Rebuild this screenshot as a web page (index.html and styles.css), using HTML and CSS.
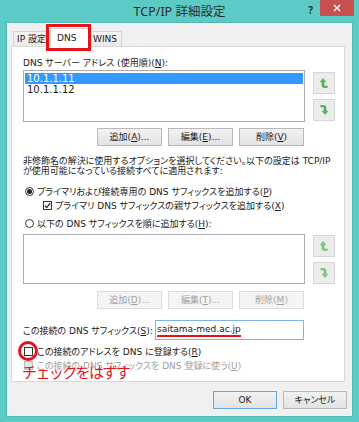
FILE: index.html
```html
<!DOCTYPE html>
<html lang="ja">
<head>
    <meta charset="UTF-8">
    <meta name="viewport" content="width=device-width, initial-scale=1.0">
    <title>TCP/IP 詳細設定</title>
    <link rel="stylesheet" href="styles.css">
</head>
<body>
<div class="window">
    <div class="titlebar">
        <span></span>
        <span class="title">TCP/IP 詳細設定</span>
        <div class="controls">
            <span class="help">?</span>
            <span class="close">
                <svg width="8" height="8" viewBox="0 0 8 8"><path d="M1 1 L7 7 M7 1 L1 7" stroke="#fff" stroke-width="1.4"/></svg>
            </span>
        </div>
    </div>

    <div class="client">
        <div class="tabs">
            <div class="tab tab-ip">IP 設定</div>
            <div class="tab tab-dns active">DNS<span class="mark-box"></span></div>
            <div class="tab tab-wins">WINS</div>
        </div>

        <div class="panel">
            <div class="label">DNS サーバー アドレス (使用順)(<u>N</u>):</div>
            <div class="list-row">
                <div class="listbox">
                    <div class="item selected">10.1.1.11</div>
                    <div class="item">10.1.1.12</div>
                </div>
                <div class="side">
                    <span class="side-btn">
                        <svg width="8" height="10" viewBox="0 0 8 10"><path d="M3 0.5 L0.3 3.8 H2 V7.4 Q2 9.5 4.2 9.5 H7.2 V8 H4.6 Q3.9 8 3.9 7.2 V3.8 H5.7 Z" fill="#4fbf4a" stroke="#2f8f30" stroke-width=".5"/></svg>
                    </span>
                    <span class="side-btn">
                        <svg width="8" height="10" viewBox="0 0 8 10"><path d="M3 0.5 L0.3 3.8 H2 V7.4 Q2 9.5 4.2 9.5 H7.2 V8 H4.6 Q3.9 8 3.9 7.2 V3.8 H5.7 Z" fill="#4fbf4a" stroke="#2f8f30" stroke-width=".5" transform="rotate(180 4 5)"/></svg>
                    </span>
                </div>
            </div>
            <div class="btn-row">
                <button class="btn">追加(<u>A</u>)...</button>
                <button class="btn">編集(<u>E</u>)...</button>
                <button class="btn">削除(<u>V</u>)</button>
            </div>

            <p class="note">非修飾名の解決に使用するオプションを選択してください。以下の設定は TCP/IP<br>が使用可能になっている接続すべてに適用されます:</p>

            <div class="opt opt-first">
                <span class="radio checked"><span class="dot"></span></span>
                <span>プライマリおよび接続専用の DNS サフィックスを追加する(<u>P</u>)</span>
            </div>
            <div class="opt opt-sub">
                <span class="check">
                    <svg width="7" height="7" viewBox="0 0 7 7"><path d="M0.8 3.6 L2.7 5.6 L6.2 1.2" fill="none" stroke="#222" stroke-width="1.3"/></svg>
                </span>
                <span>プライマリ DNS サフィックスの親サフィックスを追加する(<u>X</u>)</span>
            </div>
            <div class="opt opt-second">
                <span class="radio"></span>
                <span>以下の DNS サフィックスを順に追加する(<u>H</u>):</span>
            </div>

            <div class="list-row list-row-2">
                <div class="listbox listbox-2"></div>
                <div class="side side-2">
                    <span class="side-btn">
                        <svg width="8" height="10" viewBox="0 0 8 10"><path d="M3 0.5 L0.3 3.8 H2 V7.4 Q2 9.5 4.2 9.5 H7.2 V8 H4.6 Q3.9 8 3.9 7.2 V3.8 H5.7 Z" fill="#7ed07a" stroke="#52ad52" stroke-width=".5"/></svg>
                    </span>
                    <span class="side-btn">
                        <svg width="8" height="10" viewBox="0 0 8 10"><path d="M3 0.5 L0.3 3.8 H2 V7.4 Q2 9.5 4.2 9.5 H7.2 V8 H4.6 Q3.9 8 3.9 7.2 V3.8 H5.7 Z" fill="#7ed07a" stroke="#52ad52" stroke-width=".5" transform="rotate(180 4 5)"/></svg>
                    </span>
                </div>
            </div>
            <div class="btn-row btn-row-2">
                <button class="btn" disabled>追加(<u>D</u>)...</button>
                <button class="btn" disabled>編集(<u>T</u>)...</button>
                <button class="btn" disabled>削除(<u>M</u>)</button>
            </div>

            <div class="suffix-row">
                <span class="suffix-label">この接続の DNS サフィックス(<u>S</u>):</span>
                <div class="textbox"><span class="mark-line">saitama-med.ac.jp</span></div>
            </div>

            <div class="opt opt-register">
                <span class="check plain"><span class="mark-ring"></span></span>
                <span>この接続のアドレスを DNS に登録する(<u>R</u>)</span>
            </div>
            <div class="opt opt-disabled">
                <span class="check disabled"></span>
                <span>この接続の DNS サフィックスを DNS 登録に使う(<u>U</u>)</span>
                <span class="mark-text">チェックをはずす</span>
            </div>
        </div>

        <div class="footer">
            <button class="btn btn-wide default">OK</button>
            <button class="btn btn-wide">キャンセル</button>
        </div>
    </div>
</div>
</body>
</html>
```

FILE: styles.css
```css
* {
    box-sizing: border-box;
}
body {
    margin: 0;
    font-family: "DejaVu Sans", "Noto Sans CJK JP", sans-serif;
    font-size: 9px;
    color: #1a1a1a;
    font-feature-settings: "palt";
}
u {
    text-decoration: underline;
}
.window {
    width: 359px;
    height: 422px;
    background-color: #5ccbc6;
    display: flex;
    flex-direction: column;
}

/* title bar */
.titlebar {
    height: 23px;
    display: grid;
    grid-template-columns: 1fr auto 1fr;
}
.title {
    font-family: "Noto Sans", "Noto Sans CJK JP", sans-serif;
    font-size: 12.5px;
    line-height: 24px;
    color: #2c2c2c;
    white-space: nowrap;
}
.controls {
    justify-self: end;
    display: flex;
    align-items: flex-start;
}
.help {
    font: bold 10px "Noto Sans", sans-serif;
    color: #2c2c2c;
    margin: 3px 7px 0 0;
}
.close {
    width: 34px;
    height: 16px;
    margin-right: 5px;
    background-color: #c75050;
    display: flex;
    align-items: center;
    justify-content: center;
}

/* dialog body */
.client {
    flex: 1;
    margin: 0 7px 6px;
    padding: 5px 7px 0 4px;
    background-color: #f0f0f0;
    box-shadow: 0 0 0 1px #52b8b4;
    display: flex;
    flex-direction: column;
}
.tabs {
    display: flex;
    align-items: flex-end;
    height: 19px;
    margin-left: 2px;
}
.tab {
    height: 15px;
    margin-bottom: 1px;
    border: 1px solid #d4d4d4;
    border-bottom: none;
    background: linear-gradient(#f4f4f4, #e9e9e9);
    line-height: 14px;
    text-align: center;
    white-space: nowrap;
}
.tab-ip {
    width: 37px;
}
.tab-dns {
    width: 39px;
}
.tab-wins {
    width: 33px;
    border-left: none;
}
.tab.active {
    position: relative;
    z-index: 1;
    height: 19px;
    margin-bottom: 0;
    background: #fff;
    line-height: 18px;
    text-align: left;
    padding-left: 6px;
}
.mark-box {
    position: absolute;
    left: -5px;
    top: -5px;
    right: -3px;
    bottom: -4px;
    border: 3px solid #e5141b;
}

.panel {
    margin-top: -1px;
    background-color: #fff;
    border: 1px solid #d9d9d9;
    padding: 9px 9px 9px 11px;
}
.label {
    line-height: 14px;
    white-space: nowrap;
}
.list-row {
    display: flex;
    align-items: flex-start;
}
.listbox {
    width: 282px;
    height: 52px;
    border: 1px solid #abadb3;
    padding: 2px 1px;
}
.listbox-2 {
    height: 50px;
}
.item {
    font-size: 10px;
    line-height: 11px;
    padding-left: 2px;
}
.item.selected {
    background-color: #3399ff;
    color: #fff;
}
.side {
    display: flex;
    flex-direction: column;
    gap: 5px;
    margin: 2px 0 0 8px;
}
.side-2 {
    margin-top: 1px;
}
.side-btn {
    width: 22px;
    height: 22px;
    border: 1px solid #d6d6d6;
    background-color: #ececec;
    display: flex;
    align-items: center;
    justify-content: center;
}

.btn-row {
    display: flex;
    justify-content: flex-end;
    gap: 6px;
    width: 281px;
    margin-top: 6px;
}
.btn-row-2 {
    margin-top: 7px;
}
.btn {
    width: 65px;
    height: 18px;
    padding: 0;
    border: 1px solid #b9b9b9;
    background: linear-gradient(#f2f2f2, #e3e3e3);
    font: inherit;
    color: inherit;
    line-height: 16px;
    white-space: nowrap;
}
.btn:disabled {
    border-color: #dcdcdc;
    background: #f4f4f4;
    color: #a3a3a3;
}

.note {
    margin: 10px 0 0;
    line-height: 10px;
    white-space: nowrap;
}
.opt {
    position: relative;
    display: flex;
    align-items: center;
    gap: 3px;
    height: 14px;
    white-space: nowrap;
}
.opt-first {
    margin-top: 8px;
    padding-left: 2px;
}
.opt-sub {
    padding-left: 20px;
}
.opt-second {
    margin-top: 4px;
    padding-left: 2px;
}
.list-row-2 {
    margin-top: 4px;
}
.radio {
    width: 9px;
    height: 9px;
    border: 1px solid #333;
    border-radius: 50%;
    background: #fff;
    display: flex;
    align-items: center;
    justify-content: center;
}
.dot {
    width: 5px;
    height: 5px;
    border-radius: 50%;
    background: #222;
}
.check {
    position: relative;
    width: 9px;
    height: 9px;
    border: 1px solid #333;
    background: #fff;
    display: flex;
    align-items: center;
    justify-content: center;
}
.check.disabled {
    border-color: #bcbcbc;
    background: #e6e6e6;
}
.opt-register {
    margin-top: 4px;
    padding-left: 1px;
    gap: 4px;
}
.opt-disabled {
    padding-left: 1px;
    gap: 4px;
    color: #a0a0a0;
}
.mark-ring {
    position: absolute;
    left: -7px;
    top: -7px;
    width: 20px;
    height: 20px;
    border: 3px solid #e5141b;
    border-radius: 50%;
}
.mark-text {
    position: absolute;
    left: -1px;
    top: 6px;
    font-family: "Noto Sans CJK JP", sans-serif;
    font-size: 15px;
    line-height: 16px;
    letter-spacing: -1.6px;
    color: #e5141b;
    font-feature-settings: normal;
}

.suffix-row {
    display: flex;
    align-items: center;
    margin-top: 11px;
}
.suffix-label {
    width: 132px;
    flex-shrink: 0;
    white-space: nowrap;
}
.textbox {
    width: 149px;
    height: 20px;
    border: 1px solid #7eb4ea;
    padding: 2px 0 0 1px;
    display: flex;
    align-items: flex-start;
}
.mark-line {
    line-height: 12px;
    border-bottom: 2.5px solid #e5141b;
}

.footer {
    display: flex;
    justify-content: flex-end;
    gap: 6px;
    margin: 9px -2px 0 0;
}
.btn-wide {
    width: 64px;
}
.btn.default {
    border-color: #5ea6e6;
}
```
